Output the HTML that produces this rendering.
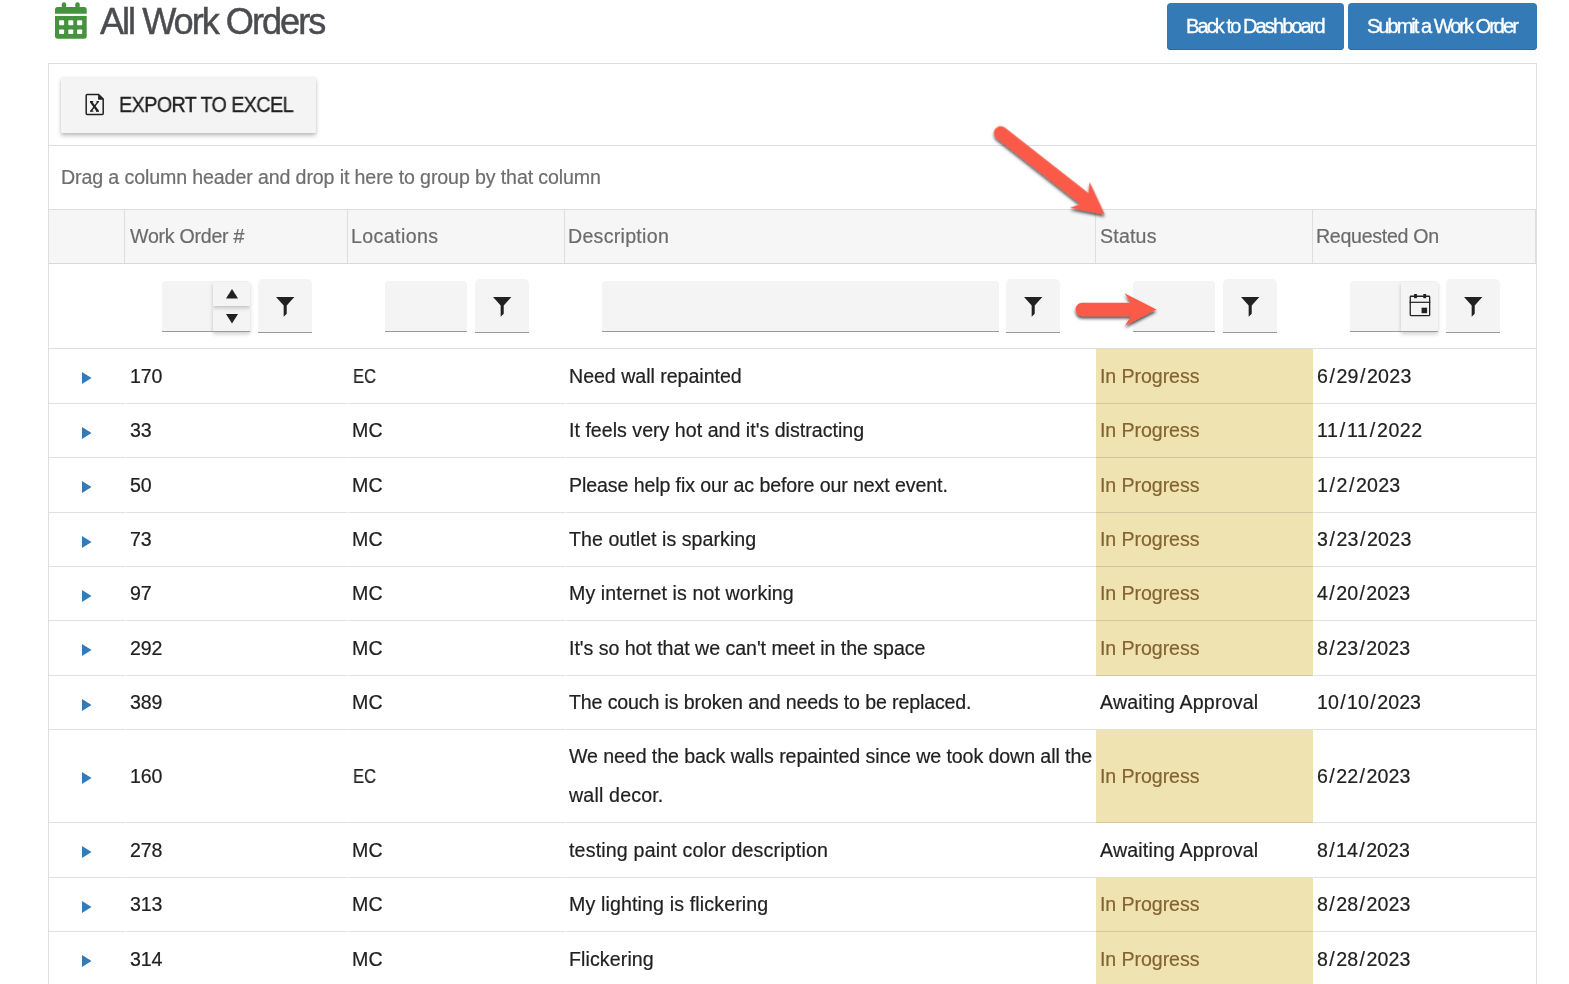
<!DOCTYPE html>
<html><head><meta charset="utf-8"><title>All Work Orders</title>
<style>
html,body{margin:0;padding:0;background:#fff;}
body{width:1569px;height:984px;overflow:hidden;position:relative;font-family:"Liberation Sans",sans-serif;}
.r{position:absolute;box-sizing:content-box;}
.t{position:absolute;white-space:nowrap;font-family:"Liberation Sans",sans-serif;will-change:transform;}
.btn{background:#337ab7;border-radius:4px;box-shadow:inset 0 -1px 0 #2e6da4;}
.sl{margin:0 1.3px;}
.inp{background:#f4f4f4;border-radius:4px 4px 0 0;border-bottom:1.3px solid #9a9a9a;box-sizing:border-box;}
.fbtn{background:#f4f4f4;border-radius:5px 5px 0 0;border-bottom:1.3px solid #9a9a9a;box-sizing:border-box;}
.spin{background:#f4f4f4;box-shadow:0 2px 4px rgba(0,0,0,.2);}
</style></head><body>
<svg class="r" style="left:55px;top:2px" width="32" height="37" viewBox="0 0 32 37">
<g fill="#45923f">
<rect x="6.8" y="0.3" width="4.3" height="7" rx="2"/><rect x="20.3" y="0.3" width="4.4" height="7" rx="2"/>
<path d="M2.6 4.9h26.5a2.6 2.6 0 0 1 2.6 2.6v4.3h-31.7v-4.3a2.6 2.6 0 0 1 2.6-2.6z"/>
<path d="M0 14.1h31.7v20a2.6 2.6 0 0 1-2.6 2.6h-26.5a2.6 2.6 0 0 1-2.6-2.6z"/>
</g>
<g fill="#fff">
<rect x="4.1" y="18.3" width="5" height="4.9" rx="0.8"/><rect x="13.3" y="18.3" width="5" height="4.9" rx="0.8"/><rect x="22.1" y="18.3" width="5.1" height="4.9" rx="0.8"/>
<rect x="4.1" y="27.4" width="5" height="4.7" rx="0.8"/><rect x="13.3" y="27.4" width="5" height="4.7" rx="0.8"/><rect x="22.1" y="27.4" width="5.1" height="4.7" rx="0.8"/>
</g></svg>
<div class="t" style="left:100px;top:-0.46px;font-size:36.2px;line-height:43.44px;color:#4b4c50;letter-spacing:-2.03px;-webkit-text-stroke:0.45px #4b4c50;">All Work Orders</div>
<div class="r btn" style="left:1167px;top:3px;width:177px;height:47px;"></div>
<div class="r btn" style="left:1348px;top:3px;width:189px;height:47px;"></div>
<div class="t" style="left:1186px;top:13.67px;font-size:20px;line-height:24.0px;color:#fff;letter-spacing:-1.9px;-webkit-text-stroke:0.35px #fff;">Back to Dashboard</div>
<div class="t" style="left:1367px;top:13.67px;font-size:20px;line-height:24.0px;color:#fff;letter-spacing:-1.98px;-webkit-text-stroke:0.35px #fff;">Submit a Work Order</div>
<div class="r" style="left:48px;top:63px;width:1487px;height:931px;border:1px solid #dedede;background:#fff"></div>
<div class="r" style="left:49px;top:145px;width:1487px;height:1px;background:#dedede;"></div>
<div class="r" style="left:61px;top:78px;width:255px;height:54.7px;background:#f4f4f4;border-radius:1px;box-shadow:0 2.5px 4px rgba(0,0,0,.2),0 0.5px 3px rgba(0,0,0,.1)"></div>
<svg class="r" style="left:80px;top:88px" width="30" height="30" viewBox="0 0 30 30">
<path d="M7.2 6.5H18.6L23.2 11.1V25.4Q23.2 26.4 22.2 26.4H7.2Q6.2 26.4 6.2 25.4V7.5Q6.2 6.5 7.2 6.5Z" fill="none" stroke="#212121" stroke-width="1.5" stroke-linejoin="round"/>
<path d="M18.1 6.4L23.4 11.7H18.1Z" fill="#212121"/>
<path d="M10.8 13.6L17.9 23.2" stroke="#212121" stroke-width="2.3" fill="none"/>
<path d="M18.1 13.6L10.9 23.2" stroke="#212121" stroke-width="1.45" fill="none"/>
<path d="M10 13.6H13.2M16.5 13.6H18.9M10 23.1H13.3M16.1 23.1H19" stroke="#212121" stroke-width="1.2" fill="none"/>
</svg>
<div class="t" style="left:118.8px;top:92.48px;font-size:22px;line-height:26.4px;color:#212121;letter-spacing:-0.7px;transform:scaleX(0.9);transform-origin:0 0;-webkit-text-stroke:0.3px #212121;">EXPORT TO EXCEL</div>
<div class="t" style="left:60.8px;top:166.45px;font-size:19.6px;line-height:23.52px;color:#6e6e6e;letter-spacing:-0.114px;-webkit-text-stroke:0.2px #6e6e6e;">Drag a column header and drop it here to group by that column</div>
<div class="r" style="left:49px;top:209px;width:1487px;height:54px;background:#f6f6f6;"></div>
<div class="r" style="left:49px;top:209px;width:1487px;height:1px;background:#dedede;"></div>
<div class="r" style="left:49px;top:263px;width:1487px;height:1px;background:#d9d9d9;"></div>
<div class="r" style="left:124px;top:209px;width:1px;height:54px;background:#dedede;"></div>
<div class="r" style="left:347px;top:209px;width:1px;height:54px;background:#dedede;"></div>
<div class="r" style="left:564px;top:209px;width:1px;height:54px;background:#dedede;"></div>
<div class="r" style="left:1095px;top:209px;width:1px;height:54px;background:#dedede;"></div>
<div class="r" style="left:1312px;top:209px;width:1px;height:54px;background:#dedede;"></div>
<div class="r" style="left:1535px;top:209px;width:1px;height:54px;background:#dedede;"></div>
<div class="t" style="left:130px;top:225.45px;font-size:19.6px;line-height:23.52px;color:#6b6b6b;letter-spacing:-0.25px;-webkit-text-stroke:0.2px #6b6b6b;">Work Order #</div>
<div class="t" style="left:351px;top:225.45px;font-size:19.6px;line-height:23.52px;color:#6b6b6b;letter-spacing:0.406px;-webkit-text-stroke:0.2px #6b6b6b;">Locations</div>
<div class="t" style="left:567.6px;top:225.45px;font-size:19.6px;line-height:23.52px;color:#6b6b6b;letter-spacing:0.278px;-webkit-text-stroke:0.2px #6b6b6b;">Description</div>
<div class="t" style="left:1100px;top:225.45px;font-size:19.6px;line-height:23.52px;color:#6b6b6b;letter-spacing:0.192px;-webkit-text-stroke:0.2px #6b6b6b;">Status</div>
<div class="t" style="left:1316px;top:225.45px;font-size:19.6px;line-height:23.52px;color:#6b6b6b;letter-spacing:-0.294px;-webkit-text-stroke:0.2px #6b6b6b;">Requested On</div>
<div class="r" style="left:49px;top:348px;width:1487px;height:1px;background:#dedede;"></div>
<div class="r inp" style="left:162px;top:281px;width:88px;height:51.3px"></div>
<div class="r fbtn" style="left:258px;top:279px;width:54px;height:54px"></div>
<svg class="r" style="left:272.8px;top:293.7px" width="24.4" height="24.4" viewBox="0 0 512 512"><path d="M64 64H448L288 240V416L224 480V240Z" fill="#212121"/></svg>
<div class="r spin" style="left:213px;top:307px;width:37px;height:25px"></div>
<div class="r spin" style="left:213px;top:281.5px;width:37px;height:24.5px"></div>
<div class="r" style="left:162px;top:331px;width:88px;height:1.3px;background:#9a9a9a"></div>
<svg class="r" style="left:226px;top:289px" width="12" height="10" viewBox="0 0 12 10"><path d="M6 0L12 9.5H0z" fill="#212121"/></svg>
<svg class="r" style="left:226px;top:313.8px" width="12" height="10" viewBox="0 0 12 10"><path d="M0 0H12L6 9.5z" fill="#212121"/></svg>
<div class="r inp" style="left:385px;top:281px;width:82px;height:51.3px"></div>
<div class="r fbtn" style="left:475px;top:279px;width:54px;height:54px"></div>
<svg class="r" style="left:489.8px;top:293.7px" width="24.4" height="24.4" viewBox="0 0 512 512"><path d="M64 64H448L288 240V416L224 480V240Z" fill="#212121"/></svg>
<div class="r inp" style="left:602px;top:281px;width:397px;height:51.3px"></div>
<div class="r fbtn" style="left:1006px;top:279px;width:54px;height:54px"></div>
<svg class="r" style="left:1020.8px;top:293.7px" width="24.4" height="24.4" viewBox="0 0 512 512"><path d="M64 64H448L288 240V416L224 480V240Z" fill="#212121"/></svg>
<div class="r inp" style="left:1133px;top:281px;width:82px;height:51.3px"></div>
<div class="r fbtn" style="left:1223px;top:279px;width:54px;height:54px"></div>
<svg class="r" style="left:1237.8px;top:293.7px" width="24.4" height="24.4" viewBox="0 0 512 512"><path d="M64 64H448L288 240V416L224 480V240Z" fill="#212121"/></svg>
<div class="r inp" style="left:1350px;top:281px;width:88px;height:51.3px"></div>
<div class="r fbtn" style="left:1446px;top:279px;width:54px;height:54px"></div>
<svg class="r" style="left:1460.8px;top:293.7px" width="24.4" height="24.4" viewBox="0 0 512 512"><path d="M64 64H448L288 240V416L224 480V240Z" fill="#212121"/></svg>
<div class="r spin" style="left:1401px;top:281.5px;width:37px;height:50.8px"></div>
<div class="r" style="left:1350px;top:331px;width:88px;height:1.3px;background:#9a9a9a"></div>
<svg class="r" style="left:1405px;top:290px" width="30" height="30" viewBox="0 0 30 30">
<rect x="5.25" y="6.25" width="19.4" height="19.3" rx="0.7" fill="none" stroke="#212121" stroke-width="1.3"/>
<rect x="4.6" y="11.7" width="20.7" height="1.2" fill="#212121"/>
<rect x="9.1" y="4" width="2.8" height="4.2" fill="#212121"/><rect x="18.3" y="4" width="2.8" height="4.2" fill="#212121"/>
<rect x="16.6" y="17.7" width="5.5" height="5.5" fill="#212121"/>
</svg>
<div class="r" style="left:1096px;top:349px;width:217px;height:55px;background:#efe3b2;"></div>
<div class="r" style="left:49px;top:403px;width:1487px;height:1px;background:rgba(0,0,0,0.12);"></div>
<div class="r" style="left:125px;top:403px;width:1px;height:1px;background:#f8f8f8;"></div>
<div class="r" style="left:348px;top:403px;width:1px;height:1px;background:#f8f8f8;"></div>
<div class="r" style="left:565px;top:403px;width:1px;height:1px;background:#f8f8f8;"></div>
<div class="r" style="left:1313px;top:403px;width:1px;height:1px;background:#f8f8f8;"></div>
<svg class="r" style="left:82px;top:372.00px" width="9.5" height="12" viewBox="0 0 9.5 12"><path d="M0 0L9.5 6L0 12z" fill="#337ab7"/></svg>
<div class="t" style="left:130px;top:365.45px;font-size:19.6px;line-height:23.52px;color:#212121;letter-spacing:-0.1px;-webkit-text-stroke:0.2px #212121;">170</div>
<div class="t" style="left:352.8px;top:365.45px;font-size:19.6px;line-height:23.52px;color:#212121;letter-spacing:0px;-webkit-text-stroke:0.2px #212121;transform:scaleX(0.85);transform-origin:0 0;">EC</div>
<div class="t" style="left:568.8px;top:365.45px;font-size:19.6px;line-height:23.52px;color:#212121;letter-spacing:-0.024px;-webkit-text-stroke:0.2px #212121;">Need wall repainted</div>
<div class="t" style="left:1100px;top:365.45px;font-size:19.6px;line-height:23.52px;color:#836330;letter-spacing:-0.074px;-webkit-text-stroke:0.2px #836330;">In Progress</div>
<div class="t" style="left:1316.7px;top:365.45px;font-size:19.6px;line-height:23.52px;color:#212121;letter-spacing:0.242px;-webkit-text-stroke:0.2px #212121;">6<span class="sl">/</span>29<span class="sl">/</span>2023</div>
<div class="r" style="left:1096px;top:404px;width:217px;height:54px;background:#efe3b2;"></div>
<div class="r" style="left:49px;top:457px;width:1487px;height:1px;background:rgba(0,0,0,0.12);"></div>
<div class="r" style="left:125px;top:457px;width:1px;height:1px;background:#f8f8f8;"></div>
<div class="r" style="left:348px;top:457px;width:1px;height:1px;background:#f8f8f8;"></div>
<div class="r" style="left:565px;top:457px;width:1px;height:1px;background:#f8f8f8;"></div>
<div class="r" style="left:1313px;top:457px;width:1px;height:1px;background:#f8f8f8;"></div>
<svg class="r" style="left:82px;top:426.50px" width="9.5" height="12" viewBox="0 0 9.5 12"><path d="M0 0L9.5 6L0 12z" fill="#337ab7"/></svg>
<div class="t" style="left:130px;top:419.45px;font-size:19.6px;line-height:23.52px;color:#212121;letter-spacing:-0.1px;-webkit-text-stroke:0.2px #212121;">33</div>
<div class="t" style="left:351.8px;top:419.45px;font-size:19.6px;line-height:23.52px;color:#212121;letter-spacing:0.161px;-webkit-text-stroke:0.2px #212121;">MC</div>
<div class="t" style="left:568.8px;top:419.45px;font-size:19.6px;line-height:23.52px;color:#212121;letter-spacing:0.018px;-webkit-text-stroke:0.2px #212121;">It feels very hot and it's distracting</div>
<div class="t" style="left:1100px;top:419.45px;font-size:19.6px;line-height:23.52px;color:#836330;letter-spacing:-0.074px;-webkit-text-stroke:0.2px #836330;">In Progress</div>
<div class="t" style="left:1316.7px;top:419.45px;font-size:19.6px;line-height:23.52px;color:#212121;letter-spacing:0.536px;-webkit-text-stroke:0.2px #212121;">11<span class="sl">/</span>11<span class="sl">/</span>2022</div>
<div class="r" style="left:1096px;top:458px;width:217px;height:55px;background:#efe3b2;"></div>
<div class="r" style="left:49px;top:512px;width:1487px;height:1px;background:rgba(0,0,0,0.12);"></div>
<div class="r" style="left:125px;top:512px;width:1px;height:1px;background:#f8f8f8;"></div>
<div class="r" style="left:348px;top:512px;width:1px;height:1px;background:#f8f8f8;"></div>
<div class="r" style="left:565px;top:512px;width:1px;height:1px;background:#f8f8f8;"></div>
<div class="r" style="left:1313px;top:512px;width:1px;height:1px;background:#f8f8f8;"></div>
<svg class="r" style="left:82px;top:481.00px" width="9.5" height="12" viewBox="0 0 9.5 12"><path d="M0 0L9.5 6L0 12z" fill="#337ab7"/></svg>
<div class="t" style="left:130px;top:474.45px;font-size:19.6px;line-height:23.52px;color:#212121;letter-spacing:-0.1px;-webkit-text-stroke:0.2px #212121;">50</div>
<div class="t" style="left:351.8px;top:474.45px;font-size:19.6px;line-height:23.52px;color:#212121;letter-spacing:0.161px;-webkit-text-stroke:0.2px #212121;">MC</div>
<div class="t" style="left:568.8px;top:474.45px;font-size:19.6px;line-height:23.52px;color:#212121;letter-spacing:-0.104px;-webkit-text-stroke:0.2px #212121;">Please help fix our ac before our next event.</div>
<div class="t" style="left:1100px;top:474.45px;font-size:19.6px;line-height:23.52px;color:#836330;letter-spacing:-0.074px;-webkit-text-stroke:0.2px #836330;">In Progress</div>
<div class="t" style="left:1316.7px;top:474.45px;font-size:19.6px;line-height:23.52px;color:#212121;letter-spacing:0.257px;-webkit-text-stroke:0.2px #212121;">1<span class="sl">/</span>2<span class="sl">/</span>2023</div>
<div class="r" style="left:1096px;top:513px;width:217px;height:54px;background:#efe3b2;"></div>
<div class="r" style="left:49px;top:566px;width:1487px;height:1px;background:rgba(0,0,0,0.12);"></div>
<div class="r" style="left:125px;top:566px;width:1px;height:1px;background:#f8f8f8;"></div>
<div class="r" style="left:348px;top:566px;width:1px;height:1px;background:#f8f8f8;"></div>
<div class="r" style="left:565px;top:566px;width:1px;height:1px;background:#f8f8f8;"></div>
<div class="r" style="left:1313px;top:566px;width:1px;height:1px;background:#f8f8f8;"></div>
<svg class="r" style="left:82px;top:535.50px" width="9.5" height="12" viewBox="0 0 9.5 12"><path d="M0 0L9.5 6L0 12z" fill="#337ab7"/></svg>
<div class="t" style="left:130px;top:528.45px;font-size:19.6px;line-height:23.52px;color:#212121;letter-spacing:-0.1px;-webkit-text-stroke:0.2px #212121;">73</div>
<div class="t" style="left:351.8px;top:528.45px;font-size:19.6px;line-height:23.52px;color:#212121;letter-spacing:0.161px;-webkit-text-stroke:0.2px #212121;">MC</div>
<div class="t" style="left:568.8px;top:528.45px;font-size:19.6px;line-height:23.52px;color:#212121;letter-spacing:0.043px;-webkit-text-stroke:0.2px #212121;">The outlet is sparking</div>
<div class="t" style="left:1100px;top:528.45px;font-size:19.6px;line-height:23.52px;color:#836330;letter-spacing:-0.074px;-webkit-text-stroke:0.2px #836330;">In Progress</div>
<div class="t" style="left:1316.7px;top:528.45px;font-size:19.6px;line-height:23.52px;color:#212121;letter-spacing:0.242px;-webkit-text-stroke:0.2px #212121;">3<span class="sl">/</span>23<span class="sl">/</span>2023</div>
<div class="r" style="left:1096px;top:567px;width:217px;height:54px;background:#efe3b2;"></div>
<div class="r" style="left:49px;top:620px;width:1487px;height:1px;background:rgba(0,0,0,0.12);"></div>
<div class="r" style="left:125px;top:620px;width:1px;height:1px;background:#f8f8f8;"></div>
<div class="r" style="left:348px;top:620px;width:1px;height:1px;background:#f8f8f8;"></div>
<div class="r" style="left:565px;top:620px;width:1px;height:1px;background:#f8f8f8;"></div>
<div class="r" style="left:1313px;top:620px;width:1px;height:1px;background:#f8f8f8;"></div>
<svg class="r" style="left:82px;top:589.50px" width="9.5" height="12" viewBox="0 0 9.5 12"><path d="M0 0L9.5 6L0 12z" fill="#337ab7"/></svg>
<div class="t" style="left:130px;top:582.45px;font-size:19.6px;line-height:23.52px;color:#212121;letter-spacing:-0.1px;-webkit-text-stroke:0.2px #212121;">97</div>
<div class="t" style="left:351.8px;top:582.45px;font-size:19.6px;line-height:23.52px;color:#212121;letter-spacing:0.161px;-webkit-text-stroke:0.2px #212121;">MC</div>
<div class="t" style="left:568.8px;top:582.45px;font-size:19.6px;line-height:23.52px;color:#212121;letter-spacing:0.104px;-webkit-text-stroke:0.2px #212121;">My internet is not working</div>
<div class="t" style="left:1100px;top:582.45px;font-size:19.6px;line-height:23.52px;color:#836330;letter-spacing:-0.074px;-webkit-text-stroke:0.2px #836330;">In Progress</div>
<div class="t" style="left:1316.7px;top:582.45px;font-size:19.6px;line-height:23.52px;color:#212121;letter-spacing:0.099px;-webkit-text-stroke:0.2px #212121;">4<span class="sl">/</span>20<span class="sl">/</span>2023</div>
<div class="r" style="left:1096px;top:621px;width:217px;height:55px;background:#efe3b2;"></div>
<div class="r" style="left:49px;top:675px;width:1487px;height:1px;background:rgba(0,0,0,0.12);"></div>
<div class="r" style="left:125px;top:675px;width:1px;height:1px;background:#f8f8f8;"></div>
<div class="r" style="left:348px;top:675px;width:1px;height:1px;background:#f8f8f8;"></div>
<div class="r" style="left:565px;top:675px;width:1px;height:1px;background:#f8f8f8;"></div>
<div class="r" style="left:1313px;top:675px;width:1px;height:1px;background:#f8f8f8;"></div>
<svg class="r" style="left:82px;top:644.00px" width="9.5" height="12" viewBox="0 0 9.5 12"><path d="M0 0L9.5 6L0 12z" fill="#337ab7"/></svg>
<div class="t" style="left:130px;top:637.45px;font-size:19.6px;line-height:23.52px;color:#212121;letter-spacing:-0.1px;-webkit-text-stroke:0.2px #212121;">292</div>
<div class="t" style="left:351.8px;top:637.45px;font-size:19.6px;line-height:23.52px;color:#212121;letter-spacing:0.161px;-webkit-text-stroke:0.2px #212121;">MC</div>
<div class="t" style="left:568.8px;top:637.45px;font-size:19.6px;line-height:23.52px;color:#212121;letter-spacing:-0.043px;-webkit-text-stroke:0.2px #212121;">It's so hot that we can't meet in the space</div>
<div class="t" style="left:1100px;top:637.45px;font-size:19.6px;line-height:23.52px;color:#836330;letter-spacing:-0.074px;-webkit-text-stroke:0.2px #836330;">In Progress</div>
<div class="t" style="left:1316.7px;top:637.45px;font-size:19.6px;line-height:23.52px;color:#212121;letter-spacing:0.099px;-webkit-text-stroke:0.2px #212121;">8<span class="sl">/</span>23<span class="sl">/</span>2023</div>
<div class="r" style="left:49px;top:729px;width:1487px;height:1px;background:rgba(0,0,0,0.12);"></div>
<div class="r" style="left:125px;top:729px;width:1px;height:1px;background:#f8f8f8;"></div>
<div class="r" style="left:348px;top:729px;width:1px;height:1px;background:#f8f8f8;"></div>
<div class="r" style="left:565px;top:729px;width:1px;height:1px;background:#f8f8f8;"></div>
<div class="r" style="left:1313px;top:729px;width:1px;height:1px;background:#f8f8f8;"></div>
<svg class="r" style="left:82px;top:698.50px" width="9.5" height="12" viewBox="0 0 9.5 12"><path d="M0 0L9.5 6L0 12z" fill="#337ab7"/></svg>
<div class="t" style="left:130px;top:691.45px;font-size:19.6px;line-height:23.52px;color:#212121;letter-spacing:-0.1px;-webkit-text-stroke:0.2px #212121;">389</div>
<div class="t" style="left:351.8px;top:691.45px;font-size:19.6px;line-height:23.52px;color:#212121;letter-spacing:0.161px;-webkit-text-stroke:0.2px #212121;">MC</div>
<div class="t" style="left:568.8px;top:691.45px;font-size:19.6px;line-height:23.52px;color:#212121;letter-spacing:-0.135px;-webkit-text-stroke:0.2px #212121;">The couch is broken and needs to be replaced.</div>
<div class="t" style="left:1100px;top:691.45px;font-size:19.6px;line-height:23.52px;color:#212121;letter-spacing:0.167px;-webkit-text-stroke:0.2px #212121;">Awaiting Approval</div>
<div class="t" style="left:1316.7px;top:691.45px;font-size:19.6px;line-height:23.52px;color:#212121;letter-spacing:0.082px;-webkit-text-stroke:0.2px #212121;">10<span class="sl">/</span>10<span class="sl">/</span>2023</div>
<div class="r" style="left:1096px;top:730px;width:217px;height:93px;background:#efe3b2;"></div>
<div class="r" style="left:49px;top:822px;width:1487px;height:1px;background:rgba(0,0,0,0.12);"></div>
<div class="r" style="left:125px;top:822px;width:1px;height:1px;background:#f8f8f8;"></div>
<div class="r" style="left:348px;top:822px;width:1px;height:1px;background:#f8f8f8;"></div>
<div class="r" style="left:565px;top:822px;width:1px;height:1px;background:#f8f8f8;"></div>
<div class="r" style="left:1313px;top:822px;width:1px;height:1px;background:#f8f8f8;"></div>
<svg class="r" style="left:82px;top:772.00px" width="9.5" height="12" viewBox="0 0 9.5 12"><path d="M0 0L9.5 6L0 12z" fill="#337ab7"/></svg>
<div class="t" style="left:130px;top:765.45px;font-size:19.6px;line-height:23.52px;color:#212121;letter-spacing:-0.1px;-webkit-text-stroke:0.2px #212121;">160</div>
<div class="t" style="left:352.8px;top:765.45px;font-size:19.6px;line-height:23.52px;color:#212121;letter-spacing:0px;-webkit-text-stroke:0.2px #212121;transform:scaleX(0.85);transform-origin:0 0;">EC</div>
<div class="t" style="left:568.8px;top:745.45px;font-size:19.6px;line-height:23.52px;color:#212121;letter-spacing:-0.082px;-webkit-text-stroke:0.2px #212121;">We need the back walls repainted since we took down all the</div>
<div class="t" style="left:568.8px;top:784.45px;font-size:19.6px;line-height:23.52px;color:#212121;letter-spacing:0.174px;-webkit-text-stroke:0.2px #212121;">wall decor.</div>
<div class="t" style="left:1100px;top:765.45px;font-size:19.6px;line-height:23.52px;color:#836330;letter-spacing:-0.074px;-webkit-text-stroke:0.2px #836330;">In Progress</div>
<div class="t" style="left:1316.7px;top:765.45px;font-size:19.6px;line-height:23.52px;color:#212121;letter-spacing:0.134px;-webkit-text-stroke:0.2px #212121;">6<span class="sl">/</span>22<span class="sl">/</span>2023</div>
<div class="r" style="left:49px;top:877px;width:1487px;height:1px;background:rgba(0,0,0,0.12);"></div>
<div class="r" style="left:125px;top:877px;width:1px;height:1px;background:#f8f8f8;"></div>
<div class="r" style="left:348px;top:877px;width:1px;height:1px;background:#f8f8f8;"></div>
<div class="r" style="left:565px;top:877px;width:1px;height:1px;background:#f8f8f8;"></div>
<div class="r" style="left:1313px;top:877px;width:1px;height:1px;background:#f8f8f8;"></div>
<svg class="r" style="left:82px;top:846.00px" width="9.5" height="12" viewBox="0 0 9.5 12"><path d="M0 0L9.5 6L0 12z" fill="#337ab7"/></svg>
<div class="t" style="left:130px;top:839.45px;font-size:19.6px;line-height:23.52px;color:#212121;letter-spacing:-0.1px;-webkit-text-stroke:0.2px #212121;">278</div>
<div class="t" style="left:351.8px;top:839.45px;font-size:19.6px;line-height:23.52px;color:#212121;letter-spacing:0.161px;-webkit-text-stroke:0.2px #212121;">MC</div>
<div class="t" style="left:568.8px;top:839.45px;font-size:19.6px;line-height:23.52px;color:#212121;letter-spacing:0.173px;-webkit-text-stroke:0.2px #212121;">testing paint color description</div>
<div class="t" style="left:1100px;top:839.45px;font-size:19.6px;line-height:23.52px;color:#212121;letter-spacing:0.167px;-webkit-text-stroke:0.2px #212121;">Awaiting Approval</div>
<div class="t" style="left:1316.7px;top:839.45px;font-size:19.6px;line-height:23.52px;color:#212121;letter-spacing:0.066px;-webkit-text-stroke:0.2px #212121;">8<span class="sl">/</span>14<span class="sl">/</span>2023</div>
<div class="r" style="left:1096px;top:878px;width:217px;height:54px;background:#efe3b2;"></div>
<div class="r" style="left:49px;top:931px;width:1487px;height:1px;background:rgba(0,0,0,0.12);"></div>
<div class="r" style="left:125px;top:931px;width:1px;height:1px;background:#f8f8f8;"></div>
<div class="r" style="left:348px;top:931px;width:1px;height:1px;background:#f8f8f8;"></div>
<div class="r" style="left:565px;top:931px;width:1px;height:1px;background:#f8f8f8;"></div>
<div class="r" style="left:1313px;top:931px;width:1px;height:1px;background:#f8f8f8;"></div>
<svg class="r" style="left:82px;top:900.50px" width="9.5" height="12" viewBox="0 0 9.5 12"><path d="M0 0L9.5 6L0 12z" fill="#337ab7"/></svg>
<div class="t" style="left:130px;top:893.45px;font-size:19.6px;line-height:23.52px;color:#212121;letter-spacing:-0.1px;-webkit-text-stroke:0.2px #212121;">313</div>
<div class="t" style="left:351.8px;top:893.45px;font-size:19.6px;line-height:23.52px;color:#212121;letter-spacing:0.161px;-webkit-text-stroke:0.2px #212121;">MC</div>
<div class="t" style="left:568.8px;top:893.45px;font-size:19.6px;line-height:23.52px;color:#212121;letter-spacing:0.135px;-webkit-text-stroke:0.2px #212121;">My lighting is flickering</div>
<div class="t" style="left:1100px;top:893.45px;font-size:19.6px;line-height:23.52px;color:#836330;letter-spacing:-0.074px;-webkit-text-stroke:0.2px #836330;">In Progress</div>
<div class="t" style="left:1316.7px;top:893.45px;font-size:19.6px;line-height:23.52px;color:#212121;letter-spacing:0.134px;-webkit-text-stroke:0.2px #212121;">8<span class="sl">/</span>28<span class="sl">/</span>2023</div>
<div class="r" style="left:1096px;top:932px;width:217px;height:55px;background:#efe3b2;"></div>
<div class="r" style="left:49px;top:986px;width:1487px;height:1px;background:rgba(0,0,0,0.12);"></div>
<svg class="r" style="left:82px;top:955.00px" width="9.5" height="12" viewBox="0 0 9.5 12"><path d="M0 0L9.5 6L0 12z" fill="#337ab7"/></svg>
<div class="t" style="left:130px;top:948.45px;font-size:19.6px;line-height:23.52px;color:#212121;letter-spacing:-0.1px;-webkit-text-stroke:0.2px #212121;">314</div>
<div class="t" style="left:351.8px;top:948.45px;font-size:19.6px;line-height:23.52px;color:#212121;letter-spacing:0.161px;-webkit-text-stroke:0.2px #212121;">MC</div>
<div class="t" style="left:568.8px;top:948.45px;font-size:19.6px;line-height:23.52px;color:#212121;letter-spacing:0.1px;-webkit-text-stroke:0.2px #212121;">Flickering</div>
<div class="t" style="left:1100px;top:948.45px;font-size:19.6px;line-height:23.52px;color:#836330;letter-spacing:-0.074px;-webkit-text-stroke:0.2px #836330;">In Progress</div>
<div class="t" style="left:1316.7px;top:948.45px;font-size:19.6px;line-height:23.52px;color:#212121;letter-spacing:0.134px;-webkit-text-stroke:0.2px #212121;">8<span class="sl">/</span>28<span class="sl">/</span>2023</div>
<svg class="r" style="left:0;top:0" width="1569" height="984" viewBox="0 0 1569 984"><defs><filter id="sh" x="-20%" y="-20%" width="140%" height="140%"><feDropShadow dx="0" dy="2.3" stdDeviation="1.5" flood-color="#000" flood-opacity="0.7"/></filter></defs><g filter="url(#sh)"><g transform="translate(1156.5 309.5) rotate(0)"><line x1="-74.3" y1="0" x2="-26" y2="0" stroke="#fb5a4a" stroke-width="13.3" stroke-linecap="round"/><path d="M0 0L-32 -16.2L-25.5 -6.6L-26.5 0L-25.5 6.6L-31.5 16.2Z" fill="#fb5a4a"/></g><g transform="translate(1104.7 214.5) rotate(38.1)"><line x1="-132.2" y1="0" x2="-26" y2="0" stroke="#fb5a4a" stroke-width="13.3" stroke-linecap="round"/><path d="M0 0L-32 -16.2L-25.5 -6.6L-26.5 0L-25.5 6.6L-31.5 16.2Z" fill="#fb5a4a"/></g></g></svg>
</body></html>
